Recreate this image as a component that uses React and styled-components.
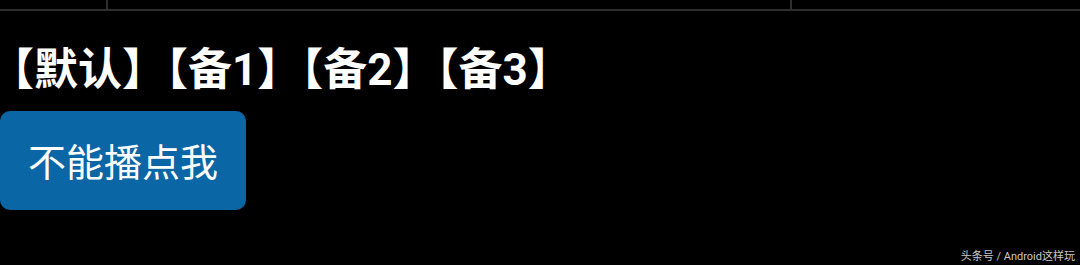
import React from 'react';
import styled, { createGlobalStyle } from "styled-components"

const Global = createGlobalStyle`
body{
  margin:0;
  background:#000;
  font-family:Roboto,"Noto Sans CJK SC",sans-serif;
}
`

const Page = styled.div`
width:1080px;
height:265px;
background:#000;
display:flex;
flex-direction:column;
position:relative;
overflow:hidden;
`

const TopBar = styled.div`
display:flex;
height:9px;
border-bottom:2px solid #2e2e2e;
`
const Cell = styled.div`
width:${p => p.w ? p.w + 'px' : 'auto'};
flex:${p => p.w ? 'none' : 1};
border-right:${p => p.last ? 'none' : '2px solid #2e2e2e'};
`

const Title = styled.h1`
margin:34px 0 0 -10px;
font-size:44px;
line-height:50px;
font-weight:700;
color:#fff;
white-space:nowrap;
font-family:Roboto,"Noto Sans CJK SC",sans-serif;
`

const Button = styled.button`
margin-top:16px;
width:246px;
height:99px;
border:none;
border-radius:10px;
background-color:#0a66a5;
color:#fff;
font-size:38px;
font-weight:400;
font-family:Roboto,"Noto Sans CJK SC",sans-serif;
padding:0 0 2px 0;
cursor:pointer;
`

const Mark = styled.span`
position:absolute;
right:5px;
bottom:2px;
font-size:11px;
color:#c8c8c8;
font-family:Roboto,"Noto Sans CJK SC",sans-serif;
`

const App = () => {
  return (
    <Page>
      <Global />
      <TopBar>
        <Cell w={106} />
        <Cell w={682} />
        <Cell last />
      </TopBar>
      <Title>【默认】【备1】【备2】【备3】</Title>
      <Button>不能播点我</Button>
      <Mark>头条号 / Android这样玩</Mark>
    </Page>
  );
};

export default App;
